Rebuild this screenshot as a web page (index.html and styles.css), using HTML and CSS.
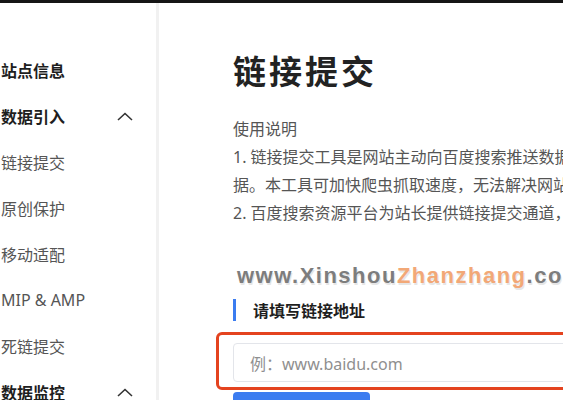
FILE: index.html
```html
<!DOCTYPE html>
<html lang="zh-CN">
<head>
<meta charset="utf-8">
<title>链接提交</title>
<link rel="stylesheet" href="styles.css">
</head>
<body>
<div class="topbar"></div>
<div class="layout">
  <nav class="sidebar">
    <div class="item group">站点信息</div>
    <div class="item group"><span>数据引入</span><svg class="chev" width="16" height="9" viewBox="0 0 16 9"><path d="M1 8 L8 1.5 L15 8" fill="none" stroke="#333" stroke-width="1.6"/></svg></div>
    <div class="item">链接提交</div>
    <div class="item">原创保护</div>
    <div class="item">移动适配</div>
    <div class="item">MIP &amp; AMP</div>
    <div class="item">死链提交</div>
    <div class="item group"><span>数据监控</span><svg class="chev" width="16" height="9" viewBox="0 0 16 9"><path d="M1 8 L8 1.5 L15 8" fill="none" stroke="#333" stroke-width="1.6"/></svg></div>
  </nav>
  <main class="main">
    <h1 class="title">链接提交</h1>
    <div class="desc">
      <p class="line">使用说明</p>
      <p class="line">1. 链接提交工具是网站主动向百度搜索推送数据的工具，本工具可缩短爬虫发现网站链接时间</p>
      <p class="line">据。本工具可加快爬虫抓取速度，无法解决网站内容是否收录问题</p>
      <p class="line">2. 百度搜索资源平台为站长提供链接提交通道，您可以提交想被百度收录的链接</p>
    </div>
    <div class="watermark">www.Xinshou<span class="wm-accent">Zhanzhang</span>.com</div>
    <div class="section-head">请填写链接地址</div>
    <div class="highlight">
      <div class="input">例：www.baidu.com</div>
    </div>
    <div class="button"></div>
  </main>
</div>
</body>
</html>
```

FILE: styles.css
```css
html, body {
  margin: 0;
  padding: 0;
  overflow: hidden;
  background: #fff;
}
body {
  width: 563px;
  height: 400px;
  font-family: "Noto Sans", "Noto Sans CJK SC", sans-serif;
  color: #222;
}
.topbar {
  height: 3px;
  background: #151515;
}
.layout {
  display: flex;
  height: 397px;
}
.sidebar {
  width: 156px;
  flex: none;
  border-right: 3px solid #f1f1f1;
  padding-top: 44px;
  box-sizing: content-box;
}
.item {
  height: 46px;
  display: flex;
  align-items: center;
  justify-content: space-between;
  padding-left: 1px;
  padding-right: 23px;
  font-size: 16px;
  color: #555;
  white-space: nowrap;
}
.item.group {
  color: #1e1e1e;
  font-weight: 700;
}
.chev {
  display: block;
}
.main {
  flex: 1;
  min-width: 0;
  padding-left: 74px;
  overflow: hidden;
  white-space: nowrap;
}
.title {
  margin: 49px 0 0;
  font-size: 33px;
  line-height: 40px;
  font-weight: 700;
  letter-spacing: 3px;
  color: #222;
}
.desc {
  margin-top: 23px;
}
.line {
  margin: 0;
  font-size: 16px;
  line-height: 28px;
  color: #555;
}
.watermark {
  margin-top: 35px;
  margin-left: 4px;
  font-family: "Liberation Sans", Arial, sans-serif;
  font-weight: 700;
  font-size: 22px;
  line-height: 28px;
  letter-spacing: 1.5px;
  color: #7d7d7d;
  text-shadow: 1px 2px 0 #e6e6e6;
}
.wm-accent {
  color: #f2a877;
}
.section-head {
  margin-top: 9px;
  height: 22px;
  display: flex;
  align-items: center;
  font-size: 16px;
  font-weight: 700;
  color: #1e1e1e;
  border-left: 3px solid #3b7cf0;
  padding-left: 17px;
}
.highlight {
  margin-top: 11px;
  margin-left: -17px;
  width: 600px;
  border: 3px solid #e4431f;
  border-radius: 6px;
  padding: 8px 0 5px 14px;
}
.input {
  height: 39px;
  box-sizing: border-box;
  border: 1px solid #e3e5ea;
  border-radius: 4px;
  display: flex;
  align-items: center;
  padding-left: 16px;
  font-size: 16px;
  color: #8f8f8f;
}
.button {
  margin-top: 2px;
  width: 137px;
  height: 36px;
  background: #3b7cf0;
  border-radius: 4px;
}
```
